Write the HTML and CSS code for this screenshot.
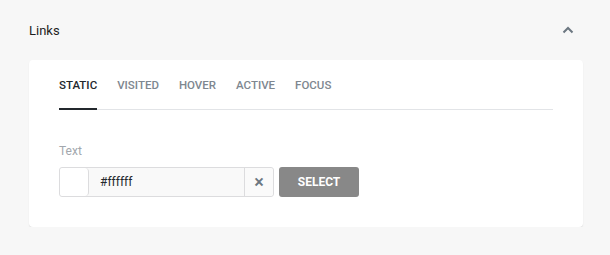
FILE: index.html
```html
<!DOCTYPE html>
<html>
	<head>
		<meta charset="UTF-8">
		<title>Links</title>
		<link rel="stylesheet" href="styles.css">
	</head>
	<body>
		<div class="panel">
			<div class="panel-head">
				<span class="panel-title">Links</span>
				<svg class="chevron" width="12" height="8" viewBox="0 0 12 8">
					<path d="M1.5 6.5 L6 2 L10.5 6.5" fill="none" stroke="#6c7781" stroke-width="2"/>
				</svg>
			</div>
			<div class="card">
				<ul class="tabs">
					<li class="tab active">Static</li>
					<li class="tab">Visited</li>
					<li class="tab">Hover</li>
					<li class="tab">Active</li>
					<li class="tab">Focus</li>
				</ul>
				<div class="field-label">Text</div>
				<div class="field-row">
					<div class="color-group">
						<span class="swatch"></span>
						<input class="color-input" type="text" value="#ffffff">
						<span class="clear">&times;</span>
					</div>
					<button class="select-btn">Select</button>
				</div>
			</div>
		</div>
	</body>
</html>
```

FILE: styles.css
```css
body{
	margin: 0;
	background: #f7f7f7;
	font-family: Roboto, "Liberation Sans", sans-serif;
}
.panel{
	padding: 0 27px 0 29px;
}
.panel-head{
	height: 60px;
	display: flex;
	align-items: center;
	justify-content: space-between;
	padding-right: 9px;
}
.panel-title{
	font-size: 13px;
	color: #1e1e1e;
}
.chevron{
	display: block;
}

.card{
	background: #fff;
	border-radius: 4px;
	box-shadow: 0 1px 1px #dedede;
	padding: 17px 30px 30px;
}
.tabs{
	list-style: none;
	margin: 0;
	padding: 0;
	display: flex;
	gap: 20px;
	border-bottom: 1px solid #e2e4e7;
}
.tab{
	font-size: 11.5px;
	line-height: 16px;
	font-weight: 500;
	text-transform: uppercase;
	color: #7e8790;
	padding-bottom: 15px;
	margin-bottom: -1px;
	border-bottom: 2px solid transparent;
	cursor: pointer;
}
.tab.active{
	color: #23282d;
	border-bottom-color: #23282d;
}

.field-label{
	margin-top: 33px;
	margin-bottom: 8px;
	font-size: 12px;
	line-height: 16px;
	color: #a2a7ad;
}
.field-row{
	display: flex;
	gap: 5px;
}
.color-group{
	display: flex;
	height: 30px;
	box-sizing: border-box;
	border: 1px solid #dcdcde;
	border-radius: 3px;
	background: #f9f9f9;
}
.swatch{
	width: 28px;
	background: #fff;
	border-right: 1px solid #dcdcde;
	border-radius: 3px 4px 4px 3px;
}
.color-input{
	width: 156px;
	border: 0;
	border-right: 1px solid #dcdcde;
	background: transparent;
	padding: 0 0 0 11px;
	box-sizing: border-box;
	font-family: Roboto, "Liberation Sans", sans-serif;
	font-size: 12px;
	color: #23282d;
	outline: none;
}
.clear{
	width: 28px;
	text-align: center;
	line-height: 28px;
	font-size: 18px;
	font-weight: 500;
	color: #6c7781;
	background: #fafafa;
	border-radius: 0 3px 3px 0;
}
.select-btn{
	width: 80px;
	height: 30px;
	border: 0;
	border-radius: 3px;
	background: #888;
	color: #fff;
	font-family: Roboto, "Liberation Sans", sans-serif;
	font-size: 12px;
	font-weight: 700;
	text-transform: uppercase;
	cursor: pointer;
}
```
